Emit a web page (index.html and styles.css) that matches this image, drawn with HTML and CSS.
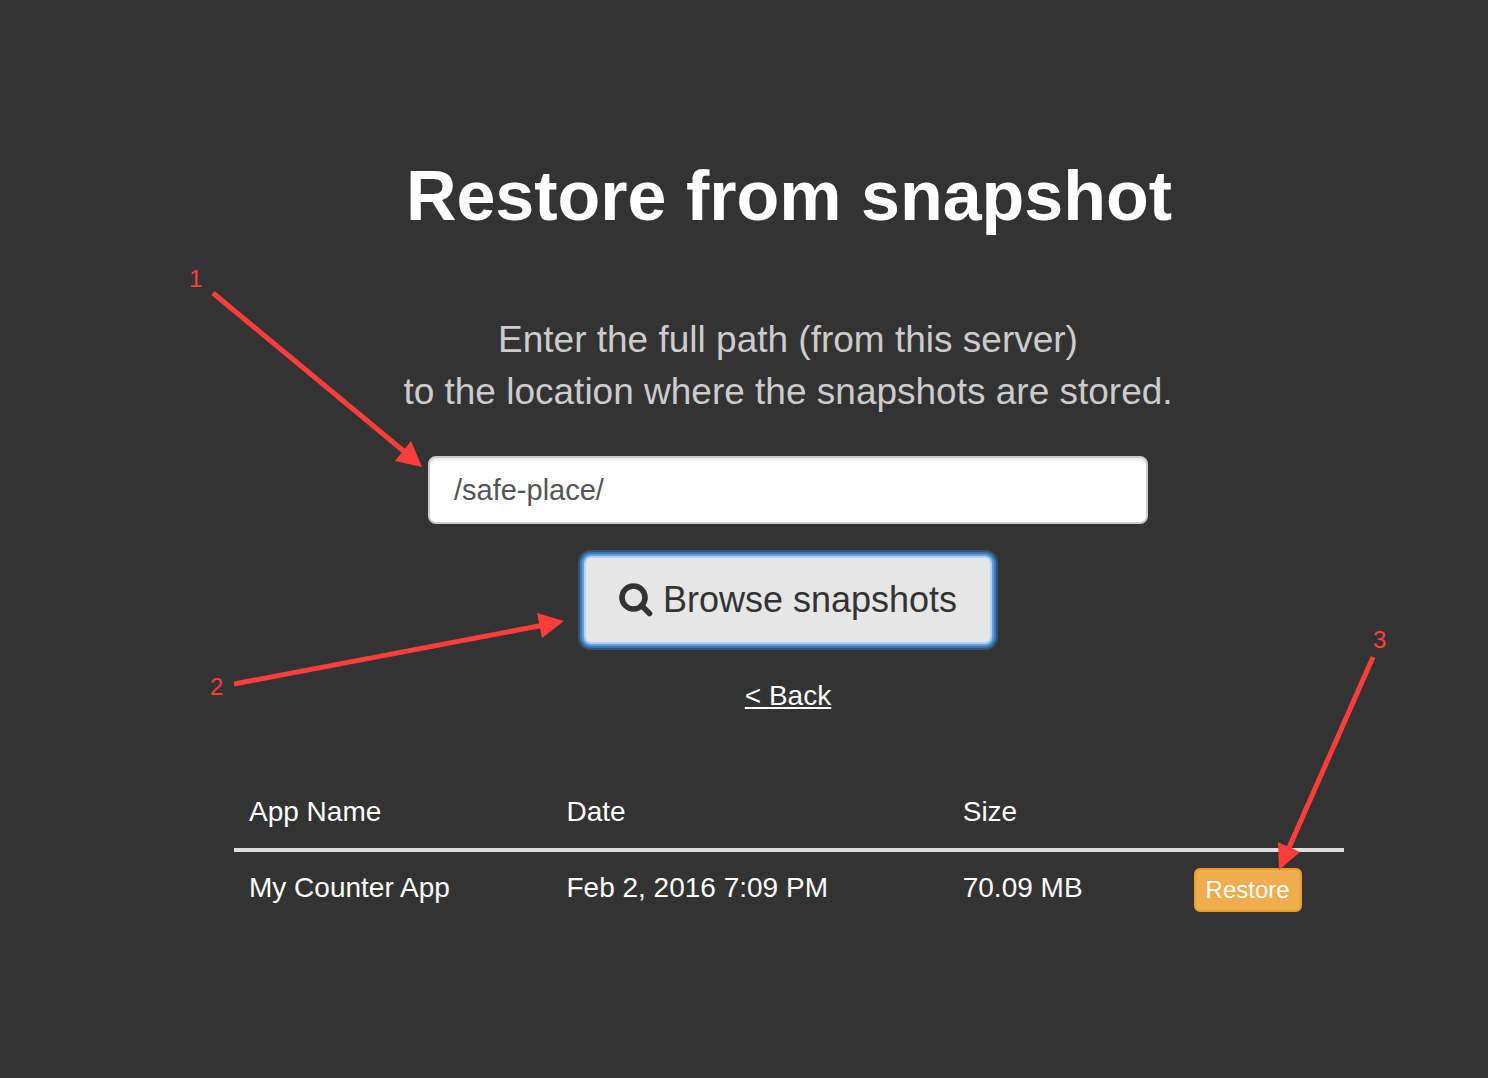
FILE: index.html
```html
<!DOCTYPE html>
<html lang="en">
<head>
<meta charset="utf-8">
<title>Restore from snapshot</title>
<link rel="stylesheet" href="styles.css">
</head>
<body>
<main class="page">
  <h1 class="title">Restore from snapshot</h1>
  <form class="form" onsubmit="return false">
    <label class="lead" for="path">Enter the full path (from this server)<br>to the location where the snapshots are stored.</label>
    <input class="path" id="path" type="text" value="/safe-place/">
    <button class="browse" type="submit">
      <svg class="icon" viewBox="0 0 34 34" aria-hidden="true"><circle cx="14.5" cy="14.5" r="11.5" fill="none" stroke="currentColor" stroke-width="5.6"/><path d="M22.5 22.5 L30.5 30.5" stroke="currentColor" stroke-width="5.6" stroke-linecap="round"/></svg>
      <span>Browse snapshots</span>
    </button>
    <a class="back" href="#">&lt; Back</a>
  </form>
  <table class="snapshots">
    <thead>
      <tr><th class="col-name">App Name</th><th class="col-date">Date</th><th class="col-size">Size</th><th></th></tr>
    </thead>
    <tbody>
      <tr><td>My Counter App</td><td>Feb 2, 2016 7:09 PM</td><td>70.09 MB</td><td><button class="restore" type="button">Restore</button></td></tr>
    </tbody>
  </table>
</main>
<svg class="notes" width="1488" height="1078" viewBox="0 0 1488 1078">
  <g stroke-width="5">
    <path d="M213 293 L406 453"/>
    <path d="M234 684 L544 625"/>
    <path d="M1373 657 L1288 850"/>
  </g>
  <path class="head" d="M422 467 L395 461 L411 441 Z"/>
  <path class="head" d="M564 621 L542 638 L537 613 Z"/>
  <path class="head" d="M1279 870 L1278 842 L1300 852 Z"/>
  <text x="189" y="287">1</text>
  <text x="210" y="695">2</text>
  <text x="1373" y="648">3</text>
</svg>
</body>
</html>
```
FILE: styles.css
```css
* { box-sizing: border-box; }

body {
  margin: 0;
  background: #333;
  color: #fff;
  font: 28px/40px "Liberation Sans", Arial, sans-serif;
  position: relative;
  min-height: 100vh;
}

.page { padding: 156px 144px 80px 234px; }

.title {
  margin: 0 0 78px;
  font-size: 70px;
  line-height: 80px;
  font-weight: bold;
  text-align: center;
}

.form {
  display: flex;
  flex-direction: column;
  align-items: center;
  padding-right: 2px;
}

.lead {
  margin-bottom: 38px;
  color: #ccc;
  font-size: 37px;
  line-height: 52px;
  text-align: center;
}

.path {
  width: 720px;
  max-width: 100%;
  height: 68px;
  margin-bottom: 32px;
  padding: 0 24px;
  border: 2px solid #ccc;
  border-radius: 8px;
  background: #fff;
  box-shadow: inset 0 2px 2px rgba(0, 0, 0, 0.08);
  color: #555;
  font: inherit;
  font-size: 29px;
}

.browse {
  display: flex;
  align-items: center;
  gap: 10px;
  height: 88px;
  margin-bottom: 32px;
  padding: 0 33px;
  border: 2px solid #b3d1f3;
  border-radius: 7px;
  background: #e6e6e6;
  box-shadow: 0 0 0 2px #5f9fe0, 0 0 0 4px #3a77b8, 0 0 0 6px #35516f;
  color: #333;
  font: inherit;
  font-size: 36px;
}

.icon { width: 34px; height: 34px; }

.back { margin-bottom: 72px; color: inherit; }

.snapshots {
  width: 100%;
  border-collapse: collapse;
  table-layout: fixed;
  text-align: left;
}

.snapshots th {
  padding: 4px 15px 16px;
  border-bottom: 4px solid #ddd;
  font-weight: normal;
}

.snapshots td { padding: 16px 15px; vertical-align: top; }
.col-name { width: 28.6%; }
.col-date { width: 35.7%; }
.col-size { width: 20.8%; }

.restore {
  display: block;
  height: 44px;
  padding: 0 10px;
  border: 2px solid #eb9c2f;
  border-radius: 6px;
  background: #f0ad4e;
  color: #fff;
  font: inherit;
  font-size: 24px;
}

.notes {
  position: absolute;
  top: 0;
  left: 0;
  pointer-events: none;
  fill: #ff3d3a;
  stroke: none;
  font-size: 24px;
}

.notes g { stroke: #ff3d3a; }
```
